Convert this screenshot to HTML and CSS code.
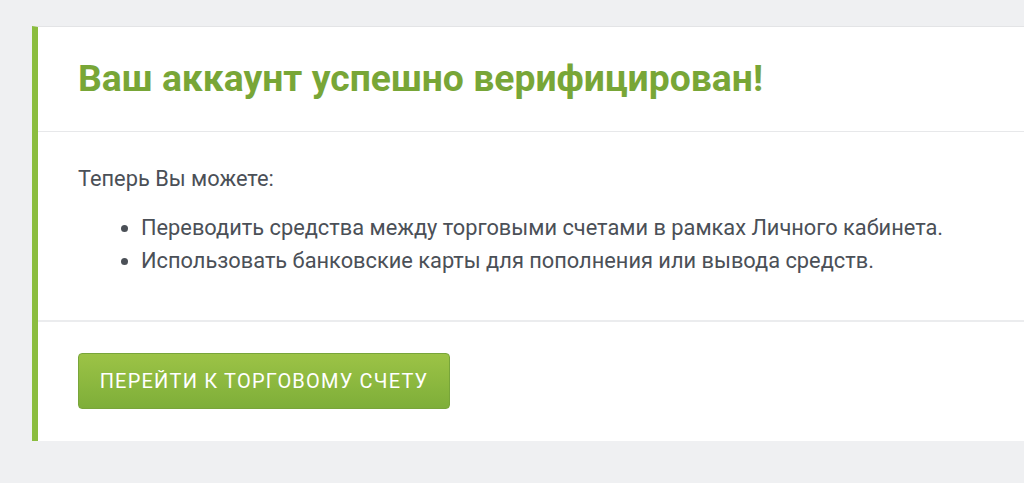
FILE: index.html
```html
<!DOCTYPE html>
<html lang="ru">
<head>
<meta charset="utf-8">
<link rel="stylesheet" href="styles.css">
</head>
<body>
<div class="page">
  <div class="card">
    <div class="card-head">
      <h1 class="title">Ваш аккаунт успешно верифицирован!</h1>
    </div>
    <div class="card-body">
      <p class="lead">Теперь Вы можете:</p>
      <ul class="list">
        <li>Переводить средства между торговыми счетами в рамках Личного кабинета.</li>
        <li>Использовать банковские карты для пополнения или вывода средств.</li>
      </ul>
    </div>
    <div class="card-foot">
      <a class="btn" href="#">Перейти к торговому счету</a>
    </div>
  </div>
</div>
</body>
</html>
```
FILE: styles.css
```css
html, body {
  margin: 0;
  padding: 0;
  background: #eff0f2;
  font-family: Roboto, "Liberation Sans", Arial, sans-serif;
}
.page {
  padding: 26px 0 0 32px;
}
.card {
  background: #fff;
  border-left: 6px solid #8bbd3f;
  border-top: 1px solid #e3e4e6;
  box-shadow: 0 2px 0 #e3e4e6;
}
.card-head {
  padding: 29px 40px 31px;
  border-bottom: 1px solid #e7e8ea;
}
.title {
  margin: 0;
  font-size: 37.3px;
  line-height: 44px;
  font-weight: 700;
  color: #78a637;
}
.card-body {
  padding: 31px 40px 0;
  height: 157px;
  border-bottom: 2px solid #ebecee;
  color: #4b5057;
  font-size: 21.8px;
}
.lead {
  margin: 0;
  line-height: 31px;
}
.list {
  margin: 17px 0 0;
  padding-left: 63px;
  line-height: 33px;
}
.card-foot {
  padding: 31px 40px 32px;
}
.btn {
  display: inline-flex;
  align-items: center;
  justify-content: center;
  box-sizing: border-box;
  width: 372px;
  height: 56px;
  border: 1px solid #78a53a;
  border-radius: 4px;
  background: linear-gradient(#9cc346, #7eae39);
  color: #fff;
  text-decoration: none;
  text-transform: uppercase;
  font-size: 20px;
  letter-spacing: 1.2px;
}
```
